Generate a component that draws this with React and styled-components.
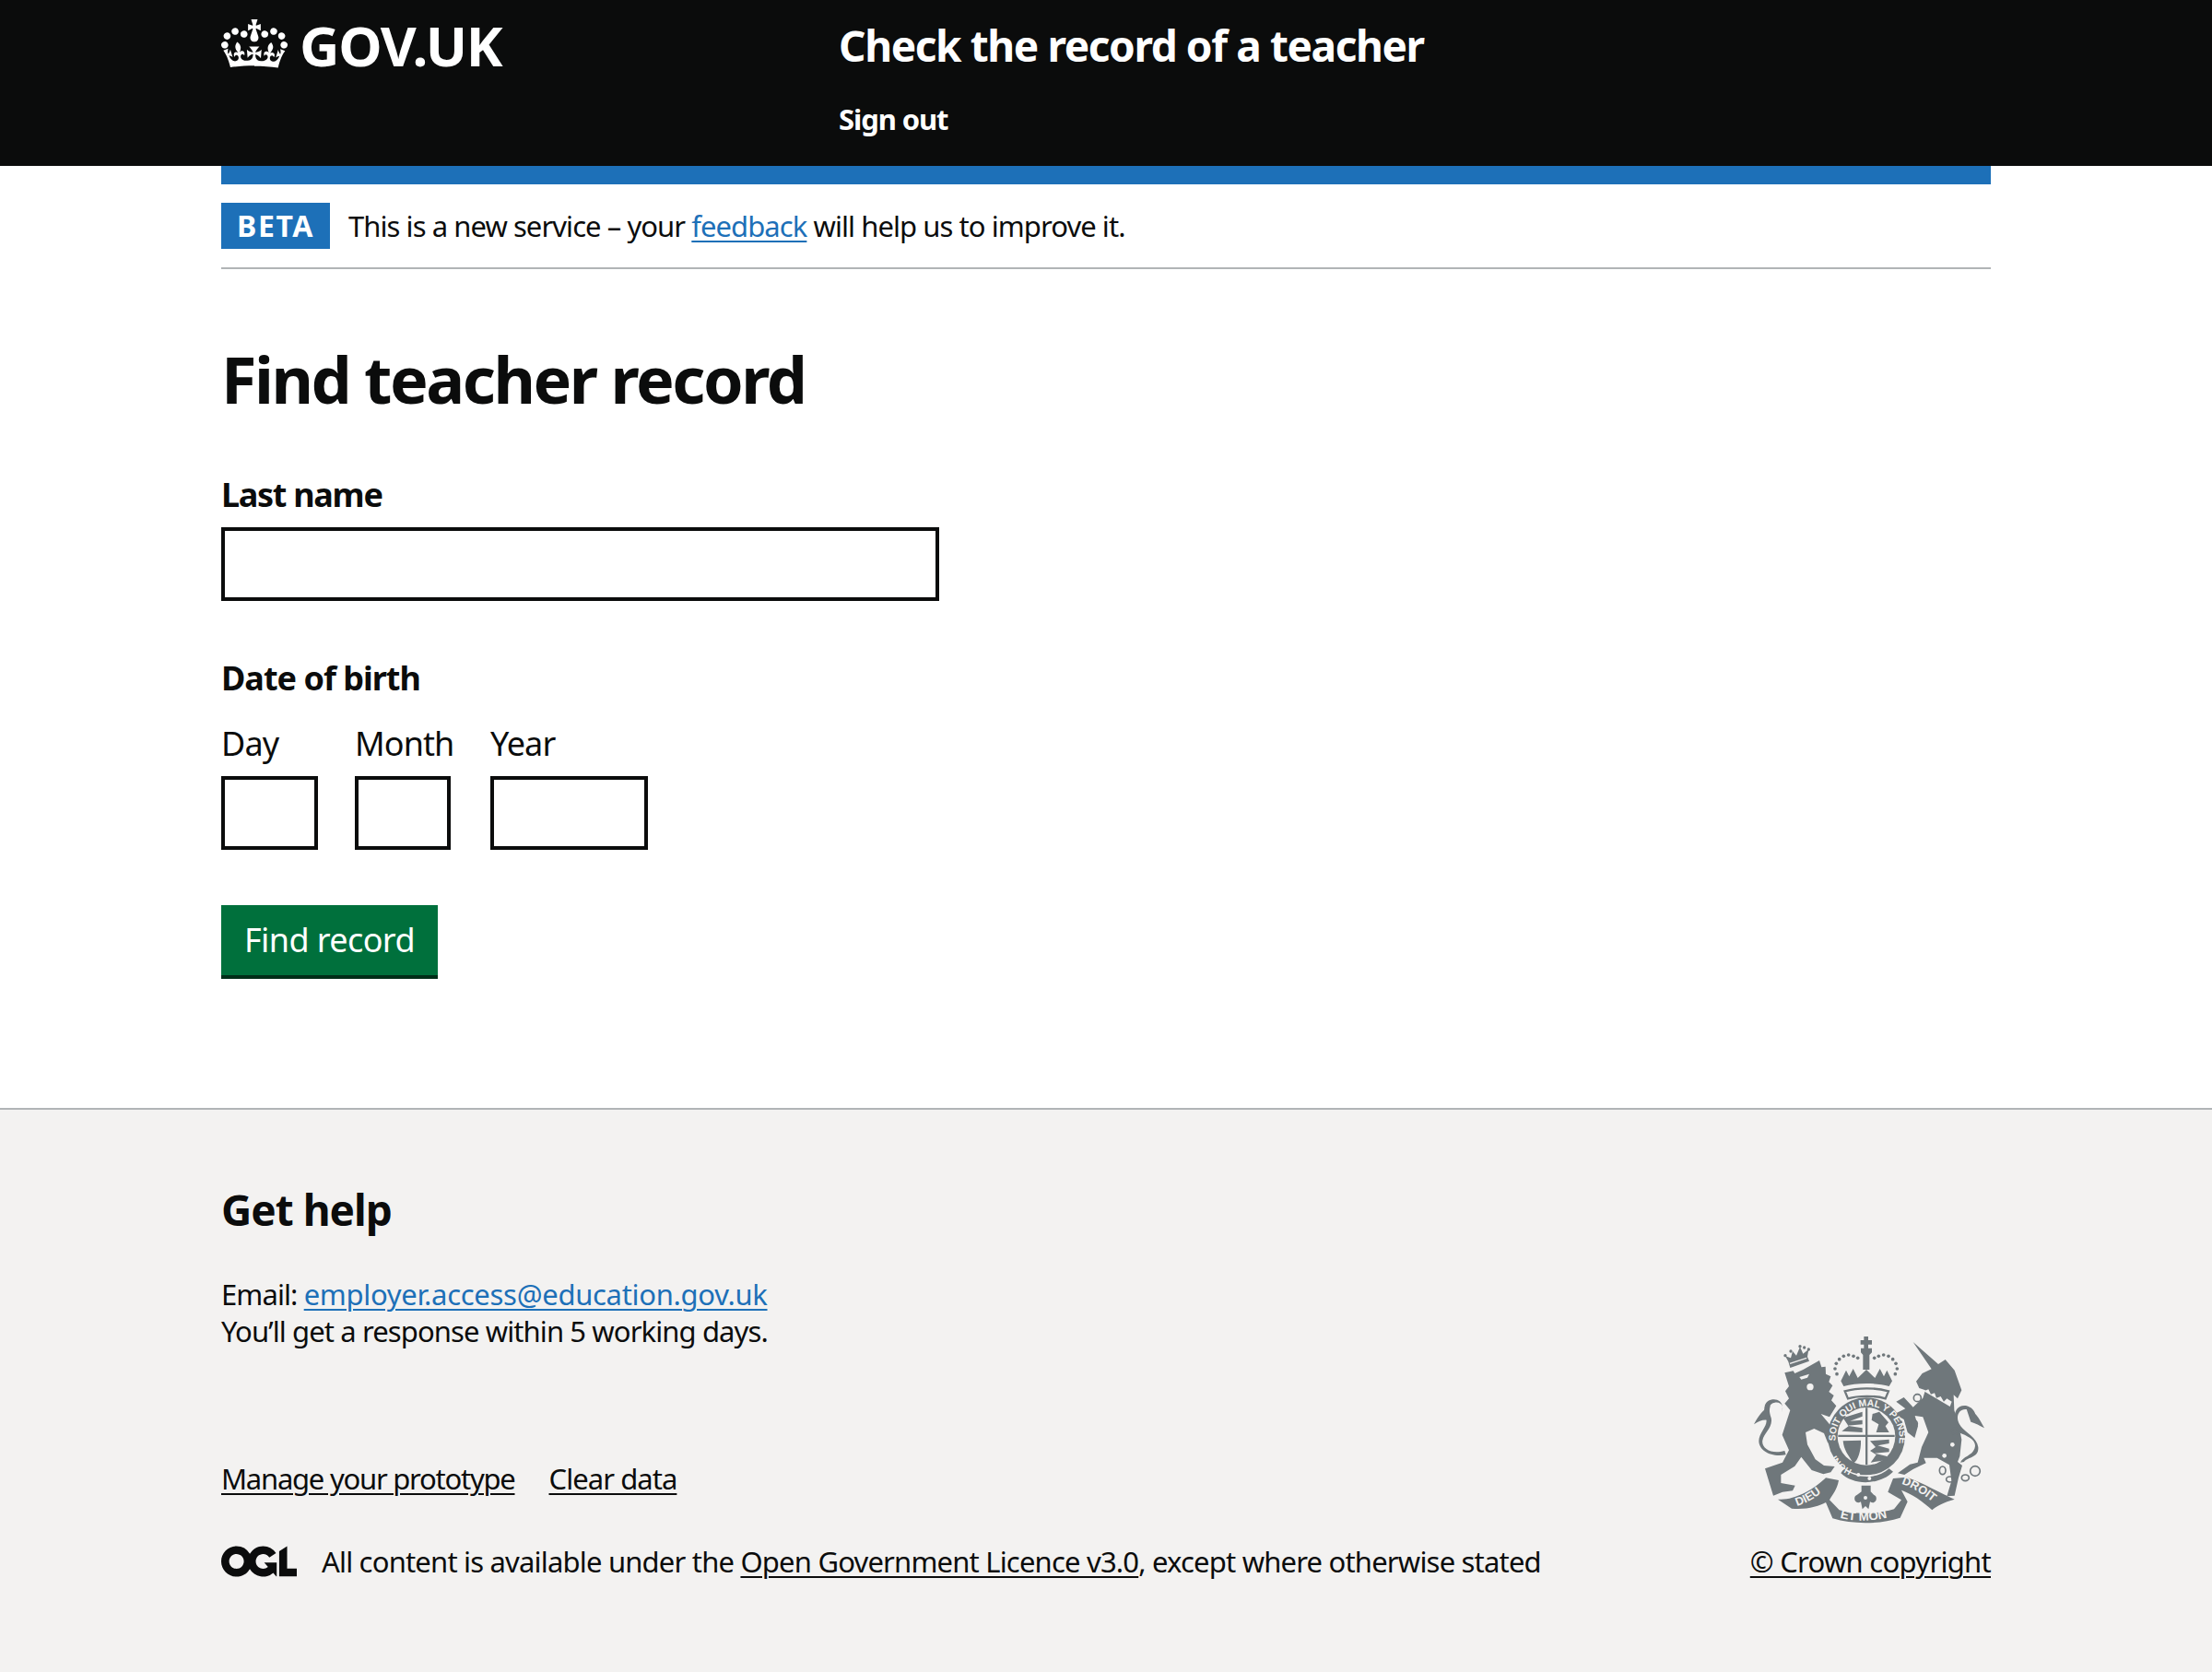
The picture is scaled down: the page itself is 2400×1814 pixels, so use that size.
import React from "react";
import styled, { createGlobalStyle } from "styled-components";

const FONT = `"Noto Sans", "Liberation Sans", Arial, sans-serif`;
const INK = "#0b0c0c";
const BLUE = "#1d70b8";
const ARMS = "#6f777b";
const PAPER = "#f3f2f1";

const Global = createGlobalStyle`
  html, body { margin: 0; padding: 0; background: #fff; }
  body { font-family: ${FONT}; color: ${INK}; }
  * { box-sizing: border-box; }
`;

const Page = styled.div`
  min-height: 1814px;
  display: flex;
  flex-direction: column;
`;
const Wrap = styled.div`
  width: 1920px;
  margin: 0 auto;
`;
const Masthead = styled.header`
  background: ${INK};
  height: 180px;
`;
const MastRow = styled(Wrap)`
  display: flex;
  padding-top: 21px;
`;
const Logo = styled.a`
  width: 670px;
  display: flex;
  align-items: flex-start;
  gap: 13px;
  color: #fff;
  font-size: 60px;
  line-height: 56px;
  font-weight: 700;
  letter-spacing: -1.3px;
`;
const ServiceCol = styled.div`
  color: #fff;
  font-weight: 700;
  padding-top: 3px;
`;
const ServiceName = styled.div`
  font-size: 46px;
  line-height: 50px;
  letter-spacing: -1.4px;
`;
const SignOut = styled.div`
  font-size: 31px;
  line-height: 40px;
  margin-top: 35px;
  letter-spacing: -1.1px;
`;
const BlueBar = styled(Wrap)`
  height: 20px;
  background: ${BLUE};
`;
const Phase = styled(Wrap)`
  display: flex;
  align-items: center;
  gap: 20px;
  padding: 20px 0;
  height: 92px;
  border-bottom: 2px solid #b1b4b6;
  font-size: 31px;
  line-height: 40px;
  letter-spacing: -0.94px;
`;
const Tag = styled.strong`
  background: ${BLUE};
  color: #fff;
  height: 50px;
  width: 118px;
  display: flex;
  align-items: center;
  justify-content: center;
  font-size: 32px;
  letter-spacing: 1.6px;
  font-weight: 700;
`;
const Link = styled.a`
  color: ${p => (p.$plain ? INK : BLUE)};
  letter-spacing: ${p => p.$ls ?? "inherit"};
  text-decoration: underline;
  text-decoration-thickness: 2px;
  text-underline-offset: 4px;
`;
const Main = styled(Wrap)`
  padding-top: 74px;
  flex: none;
  height: 910px;
`;
const H1 = styled.h1`
  margin: 0 0 56px;
  font-size: 70px;
  line-height: 90px;
  font-weight: 700;
  letter-spacing: -2.45px;
`;
const Label = styled.label`
  display: block;
  font-size: 36px;
  line-height: 50px;
  font-weight: 700;
  letter-spacing: ${p => p.$ls ?? "-1.3px"};
  margin-bottom: 10px;
`;
const TextInput = styled.input`
  display: block;
  width: ${p => p.$w}px;
  height: 80px;
  border: 4px solid ${INK};
  background: #fff;
  border-radius: 0;
  padding: 0;
`;
const Group = styled.div`
  margin-top: ${p => p.$top}px;
`;
const DateRow = styled.div`
  display: flex;
  margin-top: 21px;
`;
const DateItem = styled.div`
  width: ${p => p.$w}px;
  margin-right: ${p => p.$gap}px;
`;
const DateLabel = styled.label`
  display: block;
  font-size: 36px;
  line-height: 50px;
  letter-spacing: -0.9px;
  margin-bottom: 10px;
  white-space: nowrap;
`;
const Button = styled.button`
  display: block;
  margin-top: 60px;
  width: 235px;
  height: 80px;
  border: 0;
  border-bottom: 4px solid #002d18;
  background: #00703c;
  color: #fff;
  font-family: ${FONT};
  font-size: 36px;
  line-height: 50px;
  letter-spacing: -0.6px;
  padding: 0;
`;
const Footer = styled.footer`
  flex: 1;
  background: ${PAPER};
  border-top: 2px solid #b1b4b6;
`;
const FootInner = styled(Wrap)`
  padding-top: 78px;
  font-size: 31px;
  line-height: 40px;
  letter-spacing: -0.9px;
`;
const H2 = styled.h2`
  margin: 0 0 42px;
  font-size: 46px;
  line-height: 60px;
  font-weight: 700;
  letter-spacing: -1px;
`;
const Meta = styled.div`
  display: flex;
  justify-content: space-between;
  align-items: flex-end;
  margin-top: -34px;
`;
const MetaLeft = styled.div``;
const MetaLinks = styled.div`
  display: flex;
  gap: 37px;
  margin-bottom: 50px;
`;
const Licence = styled.div`
  display: flex;
  align-items: center;
  gap: 27px;
  letter-spacing: -0.81px;
`;
const Copyright = styled.div`
  display: flex;
  flex-direction: column;
  align-items: center;
  white-space: nowrap;
`;
const ArmsSvg = styled.svg`
  display: block;
  width: 300px;
  height: 260px;
  margin: 0 -20px -16px;
`;

const Crown = () => (
  <svg width="72" height="53" viewBox="0 0 132 97" fill="#fff" style={{ flex: "none" }}>
    <path d="M25 30.2c3.5 1.5 7.7-.2 9.1-3.7 1.5-3.6-.2-7.8-3.9-9.2-3.6-1.4-7.6.3-9.1 3.9-1.4 3.5.3 7.5 3.9 9zM9 39.5c3.6 1.5 7.8-.2 9.2-3.7 1.5-3.6-.2-7.8-3.9-9.1-3.6-1.5-7.6.2-9.1 3.8-1.4 3.5.3 7.5 3.8 9zM4.4 57.2c3.5 1.5 7.7-.2 9.1-3.8 1.5-3.6-.2-7.7-3.9-9.1-3.5-1.5-7.6.3-9.1 3.8-1.4 3.5.3 7.6 3.9 9.1zm38.3-21.4c3.5 1.5 7.7-.2 9.1-3.8 1.5-3.6-.2-7.7-3.9-9.1-3.6-1.5-7.6.3-9.1 3.8-1.3 3.6.4 7.7 3.9 9.1zm64.4-5.6c-3.6 1.5-7.8-.2-9.1-3.7-1.5-3.6.2-7.8 3.8-9.2 3.6-1.4 7.7.3 9.2 3.9 1.3 3.5-.4 7.5-3.9 9zm15.9 9.3c-3.6 1.5-7.7-.2-9.1-3.7-1.5-3.6.2-7.8 3.7-9.1 3.6-1.5 7.7.2 9.2 3.8 1.5 3.5-.3 7.5-3.8 9zm4.7 17.7c-3.6 1.5-7.8-.2-9.2-3.8-1.5-3.6.2-7.7 3.9-9.1 3.6-1.5 7.7.3 9.2 3.8 1.3 3.5-.4 7.6-3.9 9.1zM89.3 35.8c-3.6 1.5-7.8-.2-9.2-3.8-1.4-3.6.2-7.7 3.9-9.1 3.6-1.5 7.7.3 9.2 3.8 1.4 3.6-.3 7.7-3.9 9.1zM69.7 17.7l8.9 4.7V9.3l-8.9 2.8c-.3-.3-.5-.6-.9-.9L72.4 0H59.6l3.5 11.2c-.3.3-.6.5-.9.9l-8.8-2.8v13.1l8.8-4.7c.3.3.6.7.9.9l-5 15.4v.1c-.2.8-.4 1.6-.4 2.4 0 4.1 3.1 7.5 7 8.1h.2c.3 0 .7.1 1 .1.4 0 .7 0 1-.1h.2c4-.6 7.1-4.1 7.1-8.1 0-.8-.1-1.7-.4-2.4V34l-5.1-15.4c.4-.2.7-.6 1-.9zM66 92.8c16.9 0 32.8 1.1 47.1 3.2 4-16.9 8.9-26.7 14-33.5l-9.6-3.4c1 4.9 1.1 7.2 0 10.2-1.5-1.4-3-4.3-4.2-8.7L108.6 76c2.8-2 5-3.2 7.5-3.3-4.4 9.4-10 11.9-13.6 11.2-4.3-.8-6.3-4.6-5.6-7.9 1-4.7 5.7-5.9 8-.5 4.3-8.7-3-11.4-7.6-8.8 7.1-7.2 7.9-13.5 2.1-21.1-8 6.1-8.1 12.3-4.5 20.8-4.7-5.4-12.1-2.5-9.5 6.2 3.4-5.2 7.9-2 7.2 3.1-.6 4.3-6.4 7.8-13.5 7.2-10.3-.9-10.9-8-11.2-13 2.5-.5 7.1 1.8 11 7.3L80.2 60c-4.1 4.4-8 5.3-12.3 5.4 1.4-4.4 8-11.6 8-11.6H55.5s6.4 7.2 7.9 11.6c-4.2-.1-8-1-12.3-5.4l1.4 16.4c3.9-5.5 8.5-7.7 10.9-7.3-.3 5-.9 12.1-11.1 13-7.2.6-12.9-2.9-13.5-7.2-.7-5 3.8-8.3 7.1-3.1 2.7-8.7-4.6-11.6-9.4-6.2 3.7-8.5 3.6-14.7-4.6-20.8-5.8 7.6-5 13.9 2.2 21.1-4.7-2.6-11.9.1-7.7 8.8 2.3-5.5 7.1-4.2 8.1.5.7 3.3-1.3 7.1-5.7 7.9-3.5.7-9-1.8-13.5-11.2 2.5.1 4.7 1.3 7.5 3.3l-4.7-15.4c-1.2 4.4-2.7 7.2-4.3 8.7-1.1-3-.9-5.3 0-10.2l-9.5 3.4c5 6.9 9.9 16.7 14 33.5 14.8-2.1 30.8-3.2 47.7-3.2z" />
  </svg>
);

const Ogl = () => (
  <svg width="82" height="34" viewBox="0 0 483.2 195.7" fill={INK} style={{ flex: "none" }}>
    <path d="M421.5 142.8V.1l-50.7 32.3v161.1h112.4v-50.7zm-122.3-9.6A47.12 47.12 0 0 1 221 97.8c0-26 21.1-47.1 47.1-47.1 16.7 0 31.4 8.7 39.7 21.8l42.7-27.2A97.63 97.63 0 0 0 268.1 0c-36.5 0-68.3 20.1-85.1 49.7A98 98 0 0 0 97.8 0C43.9 0 0 43.9 0 97.8s43.9 97.8 97.8 97.8c36.5 0 68.3-20.1 85.1-49.7a97.76 97.76 0 0 0 149.6 25.4l19.4 22.2h3v-87.8h-80l24.3 27.5zM97.8 145c-26 0-47.1-21.1-47.1-47.1s21.1-47.1 47.1-47.1 47.2 21 47.2 47S123.8 145 97.8 145" />
  </svg>
);

const beads = [[336,165],[340,148],[350,134],[364,124],[380,120],[396,124],[410,130],[538,165],[534,148],[524,134],[510,124],[494,120],[478,124],[464,130],[342,182],[532,182]];
const lionBeads = [[174,122],[192,108],[222,92],[236,96],[250,102]];

const Arms = () => (
  <ArmsSvg viewBox="0 0 900 780">
    <defs>
      <path id="garterTop" d="M338,400 A104,104 0 1 1 527,450" />
      <path id="garterLow" d="M392,494 A115,115 0 0 1 325,405" />
      <path id="ribL" d="M212,612 C250,600 280,580 312,550" />
      <path id="ribM" d="M352,650 C400,664 470,662 525,644" />
      <path id="ribR" d="M552,540 C590,550 640,585 675,618" />
    </defs>
    <g fill={ARMS} stroke="none">
      {/* lion body */}
      <path d="M172,178 L200,172 L205,180 L232,168 L285,138 L292,160 L305,158 L306,182 L322,190 L316,208 L328,220 L316,240 L332,252 L324,268 L340,286 L318,322 L290,312 L332,362 L346,400 L335,420 L312,405 L300,375 L268,360 L240,372 L246,412 L272,460 L300,480 L335,483 L322,502 L298,508 L260,495 L226,452 L205,482 L160,510 L160,537 L206,545 L198,562 L165,566 L135,578 L108,490 L165,470 L186,430 L164,380 L190,300 L172,278 L186,262 L174,238 L186,222 Z" />
      {/* lion tail */}
      <path d="M172,432 C130,445 95,425 100,398 C104,375 135,355 128,325 C120,300 118,278 140,275 C158,272 172,285 162,306 C172,280 155,262 132,265 C100,270 102,305 112,330 C118,350 88,375 88,400 C88,432 130,455 176,445 Z" />
      <path d="M72,346 C85,320 100,300 125,285 C122,305 118,320 116,332 C100,330 88,336 72,346 Z" />
      {/* lion crown */}
      <path d="M190,162 L184,142 L174,124 L192,130 L198,108 L210,122 L222,94 L232,116 L250,102 L246,126 L252,140 Z" />
      {lionBeads.map(([x, y]) => <circle key={`${x}-${y}`} cx={x} cy={y} r="5" />)}
      {/* crest crown */}
      {beads.map(([x, y]) => <circle key={`${x}-${y}`} cx={x} cy={y} r="5.5" />)}
      <path d="M430,60 H444 V72 H456 V86 H444 V98 H456 V112 L448,120 V168 H427 V120 L420,112 V98 H430 V86 H419 V72 H430 Z" />
      <path d="M355,205 L372,170 L382,190 L395,165 L410,195 L438,168 L466,195 L482,165 L495,190 L505,170 L522,205 L512,222 C470,210 405,210 364,222 Z" />
      <path d="M368,238 C410,226 468,226 510,238 L500,262 C470,252 410,252 378,262 Z" fill="none" stroke={ARMS} strokeWidth="7" />
      {/* garter */}
      <circle cx="438" cy="385" r="126" />
      <circle cx="438" cy="385" r="94" fill={PAPER} />
      <path d="M435,292 h7 v186 h-7 Z M346,380 h184 v7 h-184 Z" />
      {/* quarters */}
      <path d="M362,325 L425,305 V320 L385,335 L425,332 V346 L375,350 L425,358 V372 L358,368 L380,352 Z" />
      <path d="M458,312 L480,305 L510,340 L500,352 L512,372 L470,372 L478,346 L455,332 Z" />
      <path d="M362,400 L420,398 L420,410 C418,445 405,470 395,472 C378,445 365,430 362,400 Z" />
      <path d="M450,400 L512,395 V408 L475,415 L512,425 V436 L465,440 L505,450 V462 L452,470 L470,445 L450,432 L468,420 Z" />
      {/* buckle band */}
      <path d="M365,490 C400,522 470,528 512,490 L525,500 C480,545 395,545 355,505 Z" />
      {/* unicorn body */}
      <path d="M600,206 L620,180 L650,166 L590,78 L672,150 L695,135 L725,170 L748,235 L735,262 L722,250 L724,300 L738,345 L748,395 L742,450 L735,468 L750,480 L738,520 L725,578 L700,580 L715,530 L708,478 L668,455 L625,455 L632,472 L590,492 L562,510 L540,505 L580,476 L605,470 L618,420 L640,372 L622,322 L596,318 L606,352 L595,390 L572,372 L560,330 L530,312 L565,295 L535,272 L560,258 L590,290 L622,260 L630,235 L610,228 Z" />
      {/* unicorn tail */}
      <path d="M738,372 C770,385 800,398 790,425 C782,448 752,450 744,470 L756,468 C768,452 805,455 802,420 C798,390 760,372 745,352 C722,320 742,290 768,298 C790,305 795,325 782,335 C802,322 792,292 762,285 C722,280 715,330 738,372 Z" />
      <path d="M762,290 C790,300 805,325 822,358 C800,345 785,340 778,338 Z" />
      {/* ribbon */}
      <path d="M150,590 C200,595 265,560 306,520 L348,528 C342,560 330,570 318,592 L350,625 C400,640 475,638 528,622 L552,592 L508,566 L525,522 L570,518 C620,535 680,570 725,590 C690,600 665,612 652,625 C620,595 585,572 552,560 L572,598 L548,650 C480,672 395,672 328,652 L306,600 C285,612 240,625 195,620 C180,610 165,600 150,590 Z" />
      {/* fleur */}
      <path d="M422,545 H452 V565 L462,575 C478,580 470,610 450,598 L445,622 L435,612 L425,622 L420,598 C400,610 392,580 408,575 L422,565 Z" />
    </g>
    <g fill={PAPER}>
      <circle cx="255" cy="224" r="11" />
      <path d="M220,192 L252,182 L246,194 L226,200 Z" />
      <circle cx="412" cy="510" r="6" /><circle cx="448" cy="522" r="6" />
      <path d="M625,238 L710,288 L716,272 L700,262 L690,272 L680,255 L666,260 L660,244 L648,248 L640,232 Z" />
      <circle cx="718" cy="412" r="7" /><circle cx="692" cy="448" r="7" />
      <path d="M190,150 L244,132 L243,128 L188,146 Z" />
      <circle cx="435" cy="585" r="6" />
    </g>
    <g fill="none" stroke={ARMS} strokeWidth="5">
      <circle cx="604" cy="260" r="12" />
      <circle cx="592" cy="344" r="12" />
      <circle cx="726" cy="368" r="10" />
      <ellipse cx="686" cy="496" rx="10" ry="13" />
      <ellipse cx="710" cy="525" rx="12" ry="9" />
      <ellipse cx="760" cy="520" rx="12" ry="10" />
      <circle cx="792" cy="498" r="16" />
    </g>
    <g fill={PAPER} fontFamily={`"Liberation Sans", Arial, sans-serif`} fontWeight="700" letterSpacing="0">
      <text fontSize="31"><textPath href="#garterTop">SOIT QUI MAL Y PENSE</textPath></text>
      <text fontSize="29"><textPath href="#garterLow">HONI</textPath></text>
      <text fontSize="38"><textPath href="#ribL">DIEU</textPath></text>
      <text fontSize="40"><textPath href="#ribM">ET MON</textPath></text>
      <text fontSize="38"><textPath href="#ribR">DROIT</textPath></text>
    </g>
  </ArmsSvg>
);

export default function App() {
  return (
    <Page>
      <Global />
      <Masthead>
        <MastRow>
          <Logo><Crown />GOV.UK</Logo>
          <ServiceCol>
            <ServiceName>Check the record of a teacher</ServiceName>
            <SignOut>Sign out</SignOut>
          </ServiceCol>
        </MastRow>
      </Masthead>
      <BlueBar />
      <Phase>
        <Tag>BETA</Tag>
        <span>This is a new service – your <Link href="#">feedback</Link> will help us to improve it.</span>
      </Phase>
      <Main>
        <H1>Find teacher record</H1>
        <Label>Last name</Label>
        <TextInput $w={779} />
        <Group $top={59}>
          <Label $ls="-1px">Date of birth</Label>
          <DateRow>
            <DateItem $w={105} $gap={40}><DateLabel>Day</DateLabel><TextInput $w={105} /></DateItem>
            <DateItem $w={104} $gap={43}><DateLabel>Month</DateLabel><TextInput $w={104} /></DateItem>
            <DateItem $w={171} $gap={0}><DateLabel>Year</DateLabel><TextInput $w={171} /></DateItem>
          </DateRow>
        </Group>
        <Button>Find record</Button>
      </Main>
      <Footer>
        <FootInner>
          <H2>Get help</H2>
          <div>Email: <Link href="#" $ls="-0.3px">employer.access@education.gov.uk</Link></div>
          <div>You’ll get a response within 5 working days.</div>
          <Meta>
            <MetaLeft>
              <MetaLinks>
                <Link $plain href="#" $ls="-1.25px">Manage your prototype</Link>
                <Link $plain href="#" $ls="-0.95px">Clear data</Link>
              </MetaLinks>
              <Licence>
                <Ogl />
                <span>All content is available under the <Link $plain href="#">Open Government Licence v3.0</Link>, except where otherwise stated</span>
              </Licence>
            </MetaLeft>
            <Copyright>
              <Arms />
              <Link $plain href="#" $ls="-0.72px">© Crown copyright</Link>
            </Copyright>
          </Meta>
        </FootInner>
      </Footer>
    </Page>
  );
}
